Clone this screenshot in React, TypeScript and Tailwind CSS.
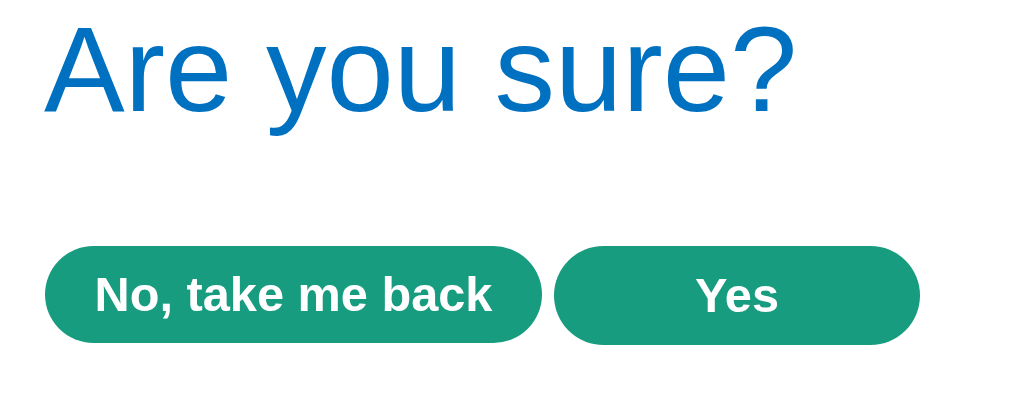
export default function App() {
  return (
    <div
      className="min-h-screen bg-white px-[44px] pt-[9px]"
      style={{ fontFamily: '"Liberation Sans", Arial, sans-serif' }}
    >
      <h1 className="text-[121px] leading-none font-normal text-[#0070c0]">Are you sure?</h1>
      <div className="mt-[116px] flex items-start gap-[12px]">
        <button className="ml-px h-[97px] w-[497px] rounded-full bg-[#179c7f] text-[48.7px] font-bold leading-none text-white">
          No, take me back
        </button>
        <button className="h-[99px] w-[366px] rounded-full bg-[#179c7f] text-[48.7px] font-bold leading-none text-white">
          Yes
        </button>
      </div>
    </div>
  );
}
